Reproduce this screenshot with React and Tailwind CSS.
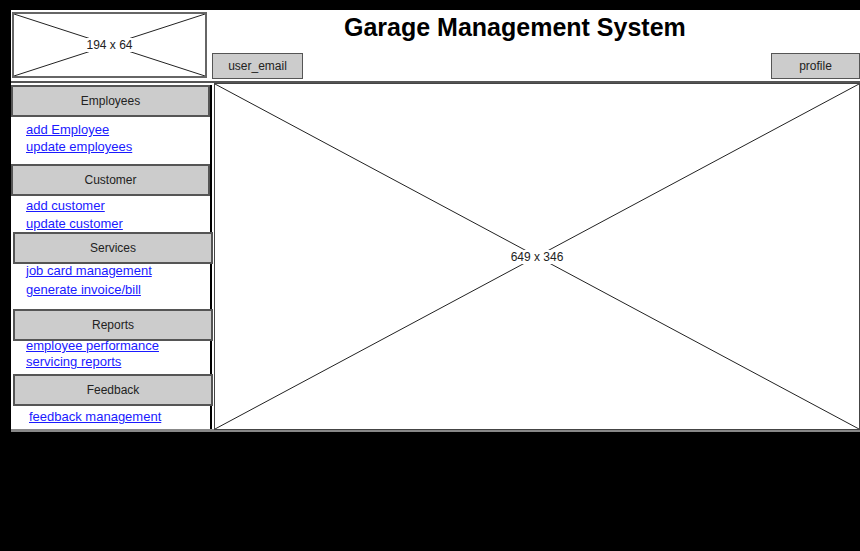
import React from 'react'

const font = { fontFamily: '"Comic Sans MS", "Liberation Sans", sans-serif' }

function Placeholder({ label, className }) {
  return (
    <div className={`relative bg-white ${className}`}>
      <svg className="absolute inset-0 h-full w-full" viewBox="0 0 100 100" preserveAspectRatio="none">
        <line x1="0" y1="0" x2="100" y2="100" stroke="#222" strokeWidth="1" vectorEffect="non-scaling-stroke" />
        <line x1="100" y1="0" x2="0" y2="100" stroke="#222" strokeWidth="1" vectorEffect="non-scaling-stroke" />
      </svg>
      <div className="absolute inset-0 flex items-center justify-center">
        <span className="bg-white px-[1px] text-[12px] leading-[14px] text-[#222]">{label}</span>
      </div>
    </div>
  )
}

function SectionHeader({ children }) {
  return (
    <div className="flex h-[32px] shrink-0 items-center justify-center border-2 border-[#555] bg-[#cccccc] text-[12px] text-[#222]">
      {children}
    </div>
  )
}

function NavLink({ children }) {
  return (
    <a href="#" className="block text-[13px] text-[#1a1aff] underline">
      {children}
    </a>
  )
}

export default function App() {
  return (
    <div className="h-[551px] w-[860px] overflow-hidden bg-black pl-[11px] pt-[10px]" style={font}>
      {/* header */}
      <div className="flex h-[73px] border-b-2 border-[#555] bg-white">
        <Placeholder label="194 x 64" className="ml-[1px] mt-[2px] h-[66px] w-[195px] border-2 border-[#666]" />
        <div className="flex flex-1 flex-col">
          <h1 className="pl-[137px] pt-[1px] text-[25px] font-bold leading-[32px] text-black">
            Garage Management System
          </h1>
          <div className="mt-[10px] flex justify-between pl-[5px]">
            <button className="h-[26px] w-[91px] border border-[#555] bg-[#cccccc] text-[12px] text-[#222]">
              user_email
            </button>
            <button className="h-[26px] w-[89px] border border-[#555] bg-[#cccccc] text-[12px] text-[#222]">
              profile
            </button>
          </div>
        </div>
      </div>

      {/* body */}
      <div className="flex h-[349px] border-b-[3px] border-[#888] bg-white">
        <aside className="mt-[2px] flex w-[201px] shrink-0 flex-col border-r-2 border-black">
          <SectionHeader>Employees</SectionHeader>
          <div className="h-[47px] pl-[15px] pt-[4px] leading-[17px]">
            <NavLink>add Employee</NavLink>
            <NavLink>update employees</NavLink>
          </div>
          <SectionHeader>Customer</SectionHeader>
          <div className="h-[36px] pl-[15px] pt-[1px] leading-[18px]">
            <NavLink>add customer</NavLink>
            <NavLink>update customer</NavLink>
          </div>
          <div className="-mr-[3px] ml-[2px]">
            <SectionHeader>Services</SectionHeader>
          </div>
          <div className="-mt-[3px] h-[48px] pl-[15px] leading-[19px]">
            <NavLink>job card management</NavLink>
            <NavLink>generate invoice/bill</NavLink>
          </div>
          <div className="-mr-[3px] ml-[2px]">
            <SectionHeader>Reports</SectionHeader>
          </div>
          <div className="-mt-[3px] h-[36px] pl-[15px] leading-[16px]">
            <NavLink>employee performance</NavLink>
            <NavLink>servicing reports</NavLink>
          </div>
          <div className="-mr-[3px] ml-[2px]">
            <SectionHeader>Feedback</SectionHeader>
          </div>
          <div className="pl-[18px] pt-[2px] leading-[17px]">
            <NavLink>feedback management</NavLink>
          </div>
        </aside>
        <Placeholder label="649 x 346" className="ml-[2px] h-[347px] flex-1 border border-[#444]" />
      </div>
    </div>
  )
}
